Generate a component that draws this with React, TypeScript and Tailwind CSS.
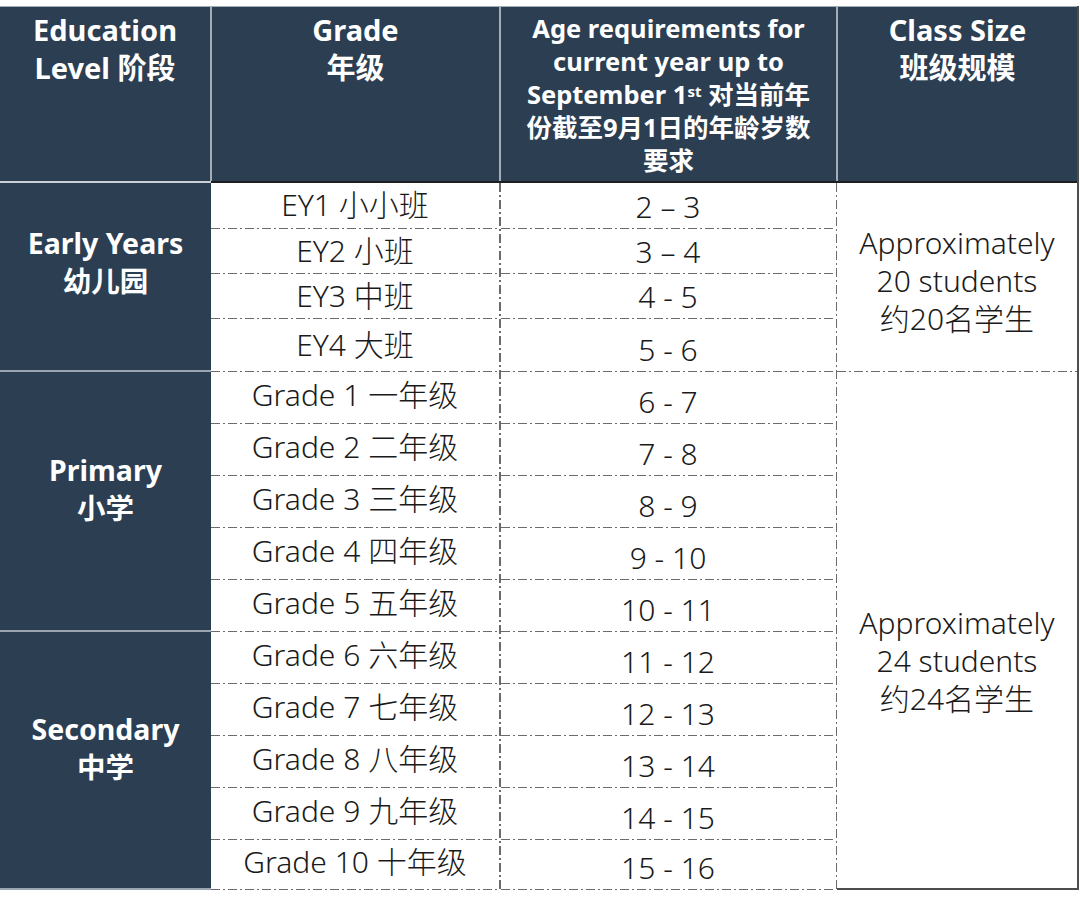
const NAVY = "bg-[#2c3e52]";

const font = { fontFamily: '"Noto Sans", "Noto Sans CJK SC", sans-serif' };

type Row = { grade: string; age: string; h: number };

const rows: Row[] = [
  { grade: "EY1 小小班", age: "2 – 3", h: 46 },
  { grade: "EY2 小班", age: "3 – 4", h: 45 },
  { grade: "EY3 中班", age: "4 - 5", h: 45 },
  { grade: "EY4 大班", age: "5 - 6", h: 53 },
  { grade: "Grade 1 一年级", age: "6 - 7", h: 52 },
  { grade: "Grade 2 二年级", age: "7 - 8", h: 52 },
  { grade: "Grade 3 三年级", age: "8 - 9", h: 52 },
  { grade: "Grade 4 四年级", age: "9 - 10", h: 52 },
  { grade: "Grade 5 五年级", age: "10 - 11", h: 52 },
  { grade: "Grade 6 六年级", age: "11 - 12", h: 52 },
  { grade: "Grade 7 七年级", age: "12 - 13", h: 52 },
  { grade: "Grade 8 八年级", age: "13 - 14", h: 52 },
  { grade: "Grade 9 九年级", age: "14 - 15", h: 52 },
  { grade: "Grade 10 十年级", age: "15 - 16", h: 50 },
];

// dash-dot line like the spreadsheet border
function DashH() {
  return (
    <div className="h-[1.5px] w-full shrink-0 bg-[repeating-linear-gradient(90deg,#6b6b6b_0_9px,transparent_9px_12px,#6b6b6b_12px_14px,transparent_14px_17px)]" />
  );
}

function DashV() {
  return (
    <div className="w-[1.5px] shrink-0 self-stretch bg-[repeating-linear-gradient(180deg,#6b6b6b_0_9px,transparent_9px_12px,#6b6b6b_12px_14px,transparent_14px_17px)]" />
  );
}

function HeadDivider() {
  return <div className="w-[2px] shrink-0 self-stretch bg-[#a3adb8]" />;
}

function Level({ en, zh, h, pb }: { en: string; zh: string; h: number; pb: string }) {
  return (
    <div
      className={`flex flex-col items-center justify-center ${pb} text-[28.5px] font-bold leading-[38px] text-white`}
      style={{ height: h }}
    >
      <span>{en}</span>
      <span>{zh}</span>
    </div>
  );
}

export default function App() {
  return (
    <div className="min-h-[907px] bg-white pt-[6px]" style={font}>
      <div className="w-[1079px] border-r-2 border-[#4d4d4d]">
        {/* header */}
        <div className={`flex h-[175px] border-t border-[#a3adb8] ${NAVY} text-white`}>
          <div className="w-[210px] pt-[4px] text-center text-[29px] font-bold leading-[38px]">
            Education
            <br />
            Level 阶段
          </div>
          <HeadDivider />
          <div className="w-[287px] pt-[4px] text-center text-[29px] font-bold leading-[38px]">
            Grade
            <br />
            年级
          </div>
          <HeadDivider />
          <div className="w-[335px] pt-[5px] text-center text-[25.5px] font-bold leading-[33px]">
            Age requirements for
            <br />
            current year up to
            <br />
            September 1<sup className="text-[15px]">st</sup> 对当前年
            <br />
            份截至9月1日的年龄岁数
            <br />
            要求
          </div>
          <HeadDivider />
          <div className="flex-1 pt-[4px] text-center text-[29px] font-bold leading-[38px]">
            Class Size
            <br />
            班级规模
          </div>
        </div>

        {/* body */}
        <div className="flex">
          <div className={`flex w-[211px] flex-col ${NAVY} border-t-2 border-t-[#c9d0d7]`}>
            <Level en="Early Years" zh="幼儿园" h={187} pb="pb-[30px]" />
            <div className="h-[2px] bg-[#9aa5b1]" />
            <Level en="Primary" zh="小学" h={258} pb="pb-[24px]" />
            <div className="h-[2px] bg-[#9aa5b1]" />
            <Level en="Secondary" zh="中学" h={256} pb="pb-[24px]" />
            <div className="h-[2px] bg-[#9aa5b1]" />
          </div>

          <div className="flex flex-1 border-t-2 border-t-[#1e1e1e] font-light text-[#1a1a1a]">
            <div className="flex w-[288px] flex-col">
              {rows.map((r, i) => (
                <div key={r.grade} className="flex flex-col" style={{ height: r.h }}>
                  <div
                    className={`flex flex-1 items-center justify-center text-[30px] leading-none ${
                      i >= 4 ? "pb-[4px]" : ""
                    }`}
                  >
                    {r.grade}
                  </div>
                  <DashH />
                </div>
              ))}
            </div>
            <DashV />
            <div className="flex w-[335px] flex-col">
              {rows.map((r) => (
                <div key={r.age} className="flex flex-col" style={{ height: r.h }}>
                  <div className="flex flex-1 items-end justify-center pb-[3px] text-[30px] leading-[36px]">
                    {r.age}
                  </div>
                  <DashH />
                </div>
              ))}
            </div>
            <DashV />
            <div className="flex flex-1 flex-col">
              <div className="flex h-[189px] flex-col">
                <div className="flex flex-1 flex-col items-center justify-center pt-[8px] text-center text-[30px] leading-[38px]">
                  <span>Approximately</span>
                  <span>20 students</span>
                  <span>约20名学生</span>
                </div>
                <DashH />
              </div>
              <div className="flex flex-1 flex-col items-center justify-center border-b-2 border-[#4d4d4d] pt-[62px] text-center text-[30px] leading-[38px]">
                <span>Approximately</span>
                <span>24 students</span>
                <span>约24名学生</span>
              </div>
            </div>
          </div>
        </div>
      </div>
    </div>
  );
}
